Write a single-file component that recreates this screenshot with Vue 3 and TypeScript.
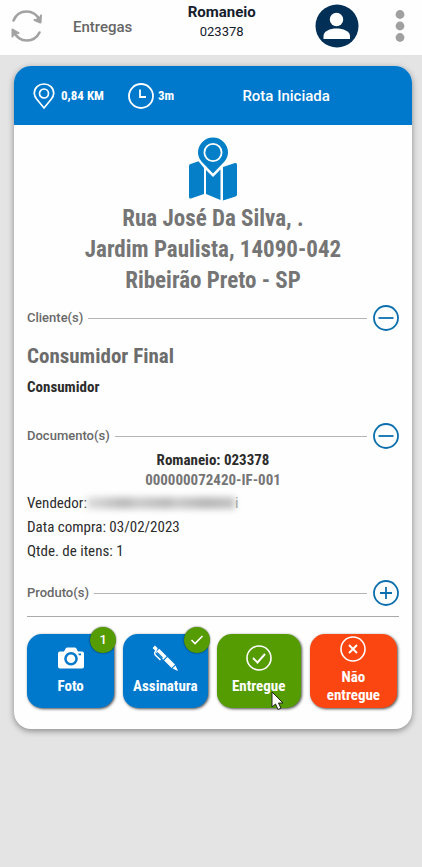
<script setup lang="ts">
import { ref } from 'vue'

const address: string[] = ['Rua José Da Silva, .', 'Jardim Paulista, 14090-042', 'Ribeirão Preto - SP']
const clientsOpen = ref(true)
const documentsOpen = ref(true)
const productsOpen = ref(false)
</script>

<template>
  <div class="page">
    <header class="topbar">
      <button class="icon-btn" type="button" aria-label="Atualizar">
        <svg width="34" height="34" viewBox="0 0 34 34" fill="none" stroke="#a2a2a2" stroke-width="2.6" stroke-linecap="round" stroke-linejoin="round">
          <path d="M3.500 11.500C6 5.500 11 2.500 16.500 2.500C22.500 2.500 27 5.500 30 11.500" />
          <path d="M31 6.500L30.500 13.500L24.500 11" fill="#a2a2a2" stroke-width="2" />
          <path d="M29.500 23.500C27 28.500 22.500 31.500 17 31.500C11 31.500 6 28 3.500 22" />
          <path d="M2.500 27.500L2.500 20.500L8.500 24" fill="#a2a2a2" stroke-width="2" />
        </svg>
      </button>
      <a class="back" href="#">Entregas</a>
      <div class="title">
        <h1>Romaneio</h1>
        <p>023378</p>
      </div>
      <button class="icon-btn profile" type="button" aria-label="Perfil">
        <svg width="44" height="44" viewBox="0 0 44 44">
          <circle cx="22" cy="22" r="21.500" fill="#022f56" />
          <circle cx="21.500" cy="15.500" r="6.700" fill="#fff" />
          <path d="M8.500 35V32C8.500 27 15 24.500 21.500 24.500S35 27 35 32V35Z" fill="#fff" />
        </svg>
      </button>
      <button class="icon-btn" type="button" aria-label="Mais opções">
        <svg width="10" height="32" viewBox="0 0 10 32" fill="#a0a0a0">
          <circle cx="5" cy="4.500" r="4.400" /><circle cx="5" cy="16" r="4.400" /><circle cx="5" cy="27.500" r="4.400" />
        </svg>
      </button>
    </header>

    <main class="card">
      <div class="route">
        <svg width="22" height="26" viewBox="0 0 22 26" fill="none" stroke="#fff" stroke-width="1.700" stroke-linejoin="round">
          <path d="M11 25L4 16.500C2 14 1.300 12.500 1.300 10.500C1.300 5 5.500 1 11 1S20.700 5 20.700 10.500C20.700 12.500 20 14 18 16.500Z" />
          <circle cx="11" cy="10.500" r="4.500" />
        </svg>
        <span class="distance">0,84 KM</span>
        <svg width="26" height="26" viewBox="0 0 26 26" fill="none" stroke="#fff" stroke-width="1.800">
          <circle cx="13" cy="13" r="12" />
          <path d="M12 6.500V14H18" />
        </svg>
        <span class="duration">3m</span>
        <strong class="status">Rota Iniciada</strong>
      </div>

      <div class="content">
        <svg class="map" width="48" height="64" viewBox="0 0 48 64" fill="#0580c8">
          <path d="M1.500 27L9.500 24.300L15 31V57L2 61.500Q0 62 0 60V29Q0 27.500 1.500 27Z" />
          <path d="M17 33L24 40L31.500 32.500V63L17 57Z" />
          <path d="M34 30L46 26Q48 25.500 48 27.500V57.500Q48 59 46.500 59.500L34 63.500Z" />
          <path d="M24 36.500L12.500 24.500C10 21.500 9 18.500 9 15.500A15 15 0 0 1 39 15.500C39 18.500 38 21.500 35.500 24.500Z" />
          <circle cx="24" cy="15.500" r="8.600" fill="none" stroke="#fff" stroke-width="1.800" />
        </svg>
        <address>
          <span v-for="line in address" :key="line">{{ line }}</span>
        </address>

        <div class="section">
          <h2>Cliente(s)</h2>
          <span class="rule"></span>
          <button class="toggle" type="button" aria-label="Cliente(s)" :aria-expanded="clientsOpen" @click="clientsOpen = !clientsOpen">
            <svg width="26" height="26" viewBox="0 0 26 26" fill="none" stroke="#0b6fae" stroke-width="1.800">
              <circle cx="13" cy="13" r="12" />
              <path d="M5.500 13H20.500" /><path v-if="!clientsOpen" d="M13 7V19" />
            </svg>
          </button>
        </div>
        <div v-if="clientsOpen" class="client">
          <h3>Consumidor Final</h3>
          <p>Consumidor</p>
        </div>

        <div class="section">
          <h2>Documento(s)</h2>
          <span class="rule"></span>
          <button class="toggle" type="button" aria-label="Documento(s)" :aria-expanded="documentsOpen" @click="documentsOpen = !documentsOpen">
            <svg width="26" height="26" viewBox="0 0 26 26" fill="none" stroke="#0b6fae" stroke-width="1.800">
              <circle cx="13" cy="13" r="12" />
              <path d="M5.500 13H20.500" /><path v-if="!documentsOpen" d="M13 7V19" />
            </svg>
          </button>
        </div>
        <div v-if="documentsOpen" class="document">
          <p class="doc-title">Romaneio: 023378</p>
          <p class="doc-code">000000072420-IF-001</p>
          <p class="detail">Vendedor: <span class="masked"></span><span class="tail">i</span></p>
          <p class="detail">Data compra: 03/02/2023</p>
          <p class="detail">Qtde. de itens: 1</p>
        </div>

        <div class="section">
          <h2>Produto(s)</h2>
          <span class="rule"></span>
          <button class="toggle" type="button" aria-label="Produto(s)" :aria-expanded="productsOpen" @click="productsOpen = !productsOpen">
            <svg width="26" height="26" viewBox="0 0 26 26" fill="none" stroke="#0b6fae" stroke-width="1.800">
              <circle cx="13" cy="13" r="12" />
              <path d="M7 13H19" /><path v-if="!productsOpen" d="M13 7V19" />
            </svg>
          </button>
        </div>

        <div class="actions">
          <button class="action" type="button">
            <svg width="26" height="26" viewBox="0 0 26 26">
              <path fill="#fff" fill-rule="evenodd" d="M2 6.500H6L7.800 3.300Q8.300 2.500 9.300 2.500H16.700Q17.700 2.500 18.200 3.300L20 6.500H24Q26 6.500 26 8.500V21.500Q26 23.500 24 23.500H2Q0 23.500 0 21.500V8.500Q0 6.500 2 6.500ZM13 7A6.800 6.800 0 1 0 13 20.600A6.800 6.800 0 1 0 13 7ZM20.500 8.500V10.300H23V8.500Z" />
              <circle cx="13" cy="13.800" r="4.300" fill="#fff" />
            </svg>
            <span>Foto</span>
            <span class="badge">1</span>
          </button>
          <button class="action" type="button">
            <svg width="26" height="26" viewBox="0 0 26 26">
              <g fill="none" stroke="#fff">
                <path d="M1.800 1.800L4.500 4.500" stroke-width="3.400" />
                <path d="M5.500 5.500L13 13" stroke-width="4.800" />
                <path d="M5 3.500L2.800 7.500Q2.300 9 3.500 10.200L8.500 15" stroke-width="1.500" />
                <path d="M5 7.500L10.500 13" stroke="#0079cc" stroke-width="1.200" />
                <path d="M13.800 13.800L21.300 21.300" stroke-width="4.800" />
              </g>
              <path d="M20.500 23.500L23.500 20.500L26 26Z" fill="#fff" />
            </svg>
            <span>Assinatura</span>
            <span class="badge">
              <svg width="14" height="12" viewBox="0 0 14 12" fill="none" stroke="#fff" stroke-width="1.600"><path d="M1.500 6L5 9.500L12.500 2" /></svg>
            </span>
          </button>
          <button class="action done" type="button">
            <svg width="26" height="26" viewBox="0 0 26 26" fill="none" stroke="#fff" stroke-width="1.600">
              <circle cx="13" cy="13" r="12" /><path d="M7 13L11.500 17.500L19 9" stroke-width="1.900" />
            </svg>
            <span>Entregue</span>
            <svg class="cursor" width="14" height="20" viewBox="0 0 14 20"><path d="M1 1V16L4.500 13L7 18.500L10 17.200L7.500 12H12Z" fill="#fff" stroke="#222" stroke-width="1" /></svg>
          </button>
          <button class="action failed" type="button">
            <svg width="26" height="26" viewBox="0 0 26 26" fill="none" stroke="#fff" stroke-width="1.600">
              <circle cx="13" cy="13" r="12" /><path d="M9 9L17 17M17 9L9 17" stroke-width="1.900" />
            </svg>
            <span>Não entregue</span>
          </button>
        </div>
      </div>
    </main>
  </div>
</template>

<style>
body {
  margin: 0;
  background: #e4e4e4;
}
</style>

<style scoped>
.page {
  min-height: 100vh;
  background: #e4e4e4;
  color: #2c2c2c;
  font-family: "Roboto Condensed", "Liberation Sans Narrow", Roboto, sans-serif;
}
h1, h2, h3, p {
  margin: 0;
}
button {
  padding: 0;
  border: 0;
  background: none;
  color: inherit;
  font: inherit;
  cursor: pointer;
}
svg {
  display: block;
  flex: none;
}
.topbar {
  display: flex;
  align-items: center;
  height: 55px;
  padding: 0 17px 0 10px;
  background: #fefefe;
  font-family: Roboto, sans-serif;
}
.icon-btn {
  flex: none;
  margin-bottom: 4px;
}
.back {
  margin: 0 0 2px 29px;
  color: #666;
  font-size: 15px;
  font-weight: 500;
  text-decoration: none;
}
.title {
  flex: 1;
  margin: 0 4px 12px 0;
  color: #14202c;
  text-align: center;
}
.title h1 {
  font-size: 15px;
  line-height: 20px;
  font-weight: 700;
}
.title p {
  font-size: 13px;
  line-height: 20px;
}
.profile {
  margin-right: 36px;
}
.card {
  margin: 11px 10px 24px 14px;
  overflow: hidden;
  border-radius: 17px;
  background: #fefefe;
  box-shadow: 0 2px 6px rgba(0, 0, 0, 0.4);
}
.route {
  display: flex;
  align-items: center;
  height: 59px;
  padding: 0 19px;
  background: #0079cc;
  color: #fff;
  font-size: 13px;
  font-weight: 700;
}
.distance {
  width: 60px;
  margin: 0 7px 0 6px;
}
.duration {
  margin-left: 4px;
}
.status {
  flex: 1;
  padding-left: 5px;
  font-family: Roboto, sans-serif;
  font-size: 15px;
  font-weight: 500;
  text-align: center;
}
.content {
  padding: 12px 13px 21px;
}
.map {
  margin: 0 auto 2px;
}
address {
  display: flex;
  flex-direction: column;
  color: #757575;
  font-size: 23px;
  line-height: 31px;
  font-style: normal;
  font-weight: 700;
  text-align: center;
}
.section {
  display: flex;
  align-items: center;
  margin-top: 10px;
}
address + .section {
  margin-top: 9px;
}
.section h2 {
  color: #686868;
  font-family: Roboto, sans-serif;
  font-size: 13px;
  line-height: 20px;
  font-weight: 500;
}
.rule {
  flex: 1;
  height: 1px;
  margin: 0 6px 0 5px;
  background: #b4b4b4;
}
.client {
  padding: 11px 0 16px;
}
.client h3 {
  color: #6c6c6c;
  font-size: 21px;
  line-height: 28px;
}
.client p {
  margin-top: 7px;
  font-size: 15px;
  line-height: 20px;
  font-weight: 700;
}
.document {
  padding: 1px 0 7px;
}
.doc-title,
.doc-code {
  font-size: 15px;
  line-height: 20px;
  font-weight: 700;
  text-align: center;
}
.doc-code {
  color: #757575;
}
.detail {
  display: flex;
  align-items: center;
  font-size: 15px;
  line-height: 24px;
}
.doc-code + .detail {
  margin-top: 1px;
}
.masked {
  width: 148px;
  height: 12px;
  background: linear-gradient(90deg, #ddd, #bbb 25%, #ccc 35%, #bcbcbc 55%, #ccc 60%, #b8b8b8 80%, #c4c4c4);
  filter: blur(3px);
}
.tail {
  color: #999;
}
.actions {
  display: grid;
  grid-template-columns: 88fr 85fr 85fr 88fr;
  gap: 9px;
  margin-top: 10px;
  padding: 17px 2px 0 0;
  border-top: 1px solid #aaa;
}
.action {
  position: relative;
  display: flex;
  flex-direction: column;
  align-items: center;
  justify-content: center;
  gap: 6px;
  min-width: 0;
  height: 74px;
  padding-bottom: 2px;
  border-radius: 15px;
  background: #0079cc;
  box-shadow: 1px 1px 3px rgba(0, 0, 0, 0.7);
  color: #fff;
  font-size: 15px;
  line-height: 18px;
  font-weight: 700;
}
.done {
  background: #559b02;
}
.failed {
  padding-right: 12px;
  padding-left: 12px;
  background: #fb4611;
}
.badge {
  position: absolute;
  top: -7px;
  right: -2px;
  display: grid;
  place-items: center;
  width: 26px;
  height: 26px;
  border-radius: 50%;
  background: #559b02;
  box-shadow: 0 0 2px rgba(0, 0, 0, 0.7);
  font-family: Roboto, sans-serif;
  font-size: 13px;
  font-weight: 500;
}
.cursor {
  position: absolute;
  top: 57px;
  left: 54px;
}
</style>
